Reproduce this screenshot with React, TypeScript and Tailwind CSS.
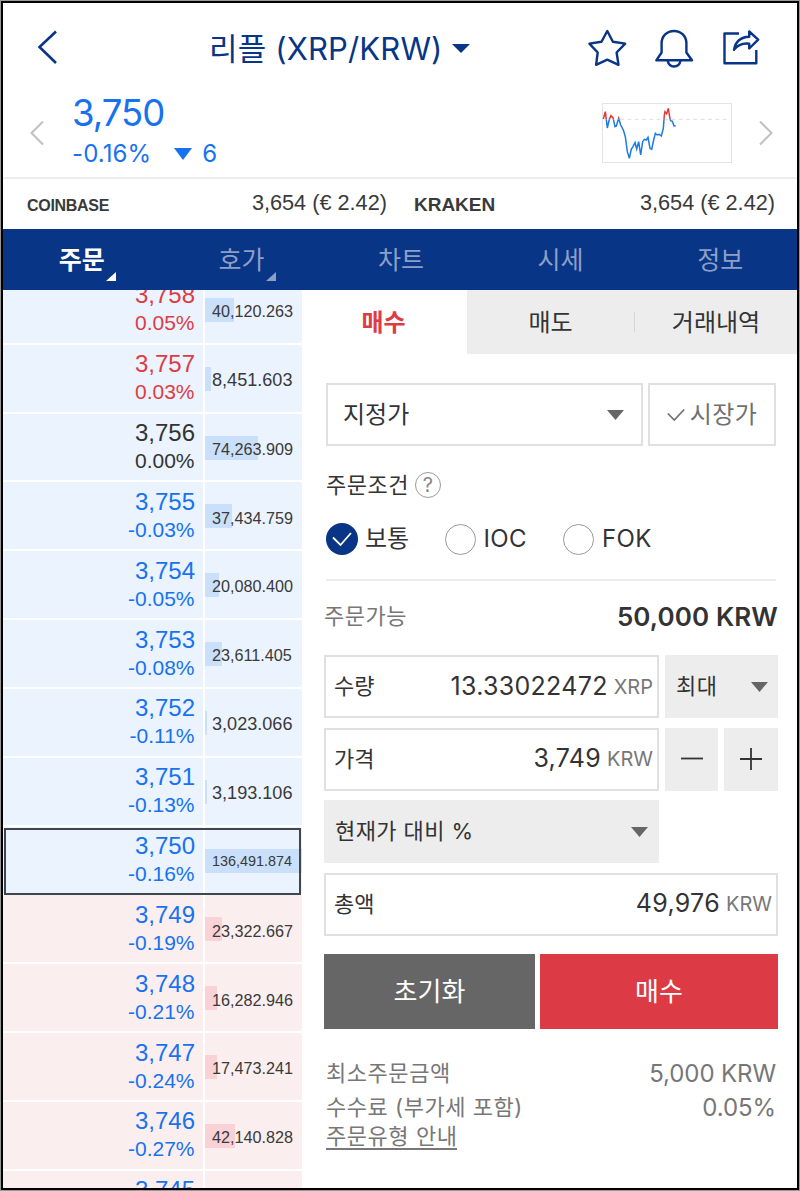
import React from "react";

const MAX_VOLUME = 136491.874;

const orders = [
  { price: "3,758", rate: "0.05%", volume: "40,120.263", color: "text-[#dd3c44]", side: "ask" },
  { price: "3,757", rate: "0.03%", volume: "8,451.603", color: "text-[#dd3c44]", side: "ask" },
  { price: "3,756", rate: "0.00%", volume: "74,263.909", color: "text-[#333333]", side: "ask" },
  { price: "3,755", rate: "-0.03%", volume: "37,434.759", color: "text-[#1772f0]", side: "ask" },
  { price: "3,754", rate: "-0.05%", volume: "20,080.400", color: "text-[#1772f0]", side: "ask" },
  { price: "3,753", rate: "-0.08%", volume: "23,611.405", color: "text-[#1772f0]", side: "ask" },
  { price: "3,752", rate: "-0.11%", volume: "3,023.066", color: "text-[#1772f0]", side: "ask" },
  { price: "3,751", rate: "-0.13%", volume: "3,193.106", color: "text-[#1772f0]", side: "ask" },
  { price: "3,750", rate: "-0.16%", volume: "136,491.874", color: "text-[#1772f0]", side: "ask" },
  { price: "3,749", rate: "-0.19%", volume: "23,322.667", color: "text-[#1772f0]", side: "bid" },
  { price: "3,748", rate: "-0.21%", volume: "16,282.946", color: "text-[#1772f0]", side: "bid" },
  { price: "3,747", rate: "-0.24%", volume: "17,473.241", color: "text-[#1772f0]", side: "bid" },
  { price: "3,746", rate: "-0.27%", volume: "42,140.828", color: "text-[#1772f0]", side: "bid" },
  { price: "3,745", rate: "", volume: "", color: "text-[#1772f0]", side: "bid" },
];

const CHART =
  "4,48 10,26 16,75 22,49 27,38 33,44 39,71 43,69 50,46 56,66 64,81 70,101 76,146 82,166 88,138 93,131 99,119 104,138 110,116 116,156 122,116 127,109 133,111 138,103 144,136 149,139 155,111 160,91 166,96 172,94 178,99 184,76 187,36 189,26 194,32 199,16 204,48 206,53 211,55 216,69 221,68";

const Caret = ({ className }: { className: string }) => (
  <svg viewBox="0 0 18 10" preserveAspectRatio="none" className={className}>
    <path d="M0 0H18L9 10Z" fill="currentColor" />
  </svg>
);

const Header = () => {
  return (
    <header className="h-[174px] shrink-0">
      <div className="flex h-[90px] items-center pl-[34px] pr-[37px] text-[#083585]">
        <svg width="22" height="36" viewBox="0 0 22 36" fill="none" stroke="currentColor" strokeWidth="2.6">
          <path d="M19 1.5L2.5 17L19 33" />
        </svg>
        <div className="ml-[150px] flex items-center">
          <h1 className="whitespace-nowrap pt-[2px] text-[31px] leading-[40px] tracking-[0.15px]">리플 (XRP/KRW)</h1>
          <Caret className="ml-[9px] h-[9px] w-[18px]" />
        </div>
        <div className="ml-auto flex gap-[26.5px]">
          <svg width="40" height="40" viewBox="0 0 40 40" fill="none" stroke="currentColor" strokeWidth="2.4" strokeLinejoin="round">
            <path d="M20.3 3L25.9 13.7L38.2 15.6L29.6 24.5L31.5 36.8L20.3 31.6L9.1 36.8L10.7 24.5L2.4 15.6L14.5 13.7Z" />
          </svg>
          <svg width="40" height="40" viewBox="0 0 40 40" fill="none" stroke="currentColor" strokeWidth="2.4" strokeLinejoin="round">
            <path d="M2.3 32.3L7.6 24.5V15.5C7.6 8 13 3 20 3S32.4 8 32.4 15.5V24.5L38 32.3Z" />
            <path d="M13.7 32.8C14.5 36.8 17 38.5 20 38.5S25.7 36.8 26.5 32.8" />
          </svg>
          <svg width="40" height="40" viewBox="0 0 40 40" fill="none" stroke="currentColor" strokeWidth="2.4" strokeLinejoin="round">
            <path d="M19 5.5H4.5V35.3H36.3V22" />
            <path d="M14 21.7C15.5 13.5 20.5 9 29.2 8.7V3.5L38.2 11.6L29.2 20.5V15.7C22.5 15 18 16.5 14 21.7Z" />
          </svg>
        </div>
      </div>
      <div className="flex h-[84px] pl-[27px] pr-[24px]">
        <svg className="mt-[27px]" width="14" height="26" viewBox="0 0 14 26" fill="none" stroke="#c0c0c0" strokeWidth="2">
          <path d="M13 1.5L1.5 13L13 24.5" />
        </svg>
        <div className="ml-[28px] text-[#1772f0]">
          <p className="text-[36.5px] leading-[40px] tracking-[-1px]">3,750</p>
          <p className="flex h-[40px] items-center pt-[1px] text-[24px] leading-[40px] tracking-[0.1px]">
            -0.16%
            <Caret className="ml-[23px] h-[12px] w-[18px]" />
            <span className="ml-[10px]">6</span>
          </p>
        </div>
        <svg className="ml-auto mt-[10px]" width="130" height="60" viewBox="0 0 390 180" fill="none">
          <defs>
            <clipPath id="up">
              <rect width="390" height="49" />
            </clipPath>
            <clipPath id="down">
              <rect y="49" width="390" height="131" />
            </clipPath>
          </defs>
          <rect x="1.5" y="1.5" width="387" height="177" stroke="#e4e4e4" strokeWidth="3" />
          <path d="M54 49H376" stroke="#dedede" strokeWidth="3" strokeDasharray="12 10" />
          <polyline points={CHART} stroke="#e03a35" strokeWidth="4.5" clipPath="url(#up)" />
          <polyline points={CHART} stroke="#1b7be0" strokeWidth="4.5" clipPath="url(#down)" />
        </svg>
        <svg className="ml-[27px] mt-[27px]" width="14" height="26" viewBox="0 0 14 26" fill="none" stroke="#c0c0c0" strokeWidth="2">
          <path d="M1 1.5L12.5 13L1 24.5" />
        </svg>
      </div>
    </header>
  );
};

const Exchanges = () => {
  return (
    <div className="flex h-[52px] shrink-0 items-center border-t-2 border-[#ededed] pl-[24px] pr-[22px] pb-px font-['Liberation_Sans',sans-serif] text-[#3a3a3a]">
      <span className="pt-[4px] text-[16px] font-bold tracking-[-0.3px]">COINBASE</span>
      <span className="ml-auto text-[21.7px]">3,654 (€ 2.42)</span>
      <span className="ml-[27px] w-[226px] pt-[3px] text-[19px] font-bold">KRAKEN</span>
      <span className="text-[21.7px]">3,654 (€ 2.42)</span>
    </div>
  );
};

const Nav = () => {
  return (
    <nav className="flex h-[61px] shrink-0 overflow-hidden bg-[#083585]">
      {["주문", "호가", "차트", "시세", "정보"].map((item, i) => (
        <div
          key={item}
          className={`relative flex w-[159.6px] shrink-0 items-center justify-center pr-[2px] pt-[2px] text-[25px] ${
            i === 0 ? "font-bold text-white" : "text-[#8d9fc8]"
          }`}
        >
          {item}
          {i < 2 && (
            <svg className="absolute bottom-[9px] left-[103px]" width="10" height="9" viewBox="0 0 10 9">
              <path d="M10 0V9H0Z" fill="currentColor" />
            </svg>
          )}
        </div>
      ))}
    </nav>
  );
};

const OrderBook = () => {
  return (
    <div className="w-[299px] shrink-0 overflow-hidden font-['Liberation_Sans',sans-serif]">
      <div className="-mt-[14.2px]">
        {orders.map((item) => {
          const bg = item.side === "ask" ? "bg-[#eaf3fe]" : "bg-[#fbeeef]";
          const bar = item.side === "ask" ? "bg-[#c9dffa]" : "bg-[#f8d2d6]";
          const size =
            item.volume.length > 10 ? "text-[14.4px]" : item.volume.length > 9 ? "text-[16.2px]" : "text-[18.1px]";
          const amount = Number(item.volume.replace(/,/g, ""));
          return (
            <div key={item.price} className="relative flex h-[68.85px] gap-[2px] pb-[2px]">
              <div className={`w-[200px] pr-[8px] pt-[5.5px] text-right ${bg} ${item.color}`}>
                <p className="text-[24px] leading-[28px]">{item.price}</p>
                <p className="pr-[0.5px] text-[21px] leading-[27.5px]">{item.rate}</p>
              </div>
              <div className={`relative flex w-[97px] items-center pl-[7px] pt-[4px] text-[#3a3a3a] ${bg} ${size}`}>
                <div
                  className={`absolute left-0 top-[22px] h-[24px] ${bar}`}
                  style={{ width: `${(amount / MAX_VOLUME) * 100}%` }}
                />
                <span className="relative">{item.volume}</span>
              </div>
              {item.price === "3,750" && (
                <div className="absolute left-px right-px top-px h-[67px] border-2 border-[#3f464d]" />
              )}
            </div>
          );
        })}
      </div>
    </div>
  );
};

const Field = ({ label, value, unit, className }: { label: string; value: string; unit: string; className: string }) => {
  return (
    <div className={`flex h-[63px] items-center border-2 border-[#e0e0e0] ${className}`}>
      <span className="pl-[8px] text-[22px]">{label}</span>
      <span className="ml-auto text-[25px] tracking-[0.3px]">{value}</span>
      <span className="pl-[6px] pr-[4px] text-[20px] text-[#777777]">{unit}</span>
    </div>
  );
};

const OrderForm = () => {
  return (
    <div className="flex-1 text-[#333333]">
      <div className="flex h-[63.5px] text-[24px]">
        <div className="flex w-[165px] items-center justify-center pr-[2px] pt-[2px] font-bold text-[#dd3c44]">매수</div>
        <div className="flex w-[167px] items-center justify-center bg-[#ededed] pt-[2px]">매도</div>
        <div className="relative flex flex-1 items-center justify-center bg-[#ededed] pr-[2px] pt-[2px]">
          <div className="absolute left-0 top-[22px] h-[20px] w-px bg-[#d6d6d6]" />
          거래내역
        </div>
      </div>

      <div className="px-[22px]">
        <div className="ml-[2px] mr-[2px] mt-[29.5px] flex h-[63px] gap-[5px]">
          <div className="flex w-[317px] items-center justify-between border-2 border-[#e0e0e0] pl-[15px] pr-[17px] text-[24px]">
            지정가
            <Caret className="h-[10px] w-[17px] text-[#666666]" />
          </div>
          <div className="flex w-[128px] items-center justify-center border-2 border-[#e0e0e0] text-[24px] text-[#707070]">
            <svg className="mr-[5px]" width="18" height="14" viewBox="0 0 18 14" fill="none" stroke="currentColor" strokeWidth="1.7">
              <path d="M0.8 5.5L7.3 12L17.2 1.5" />
            </svg>
            <span className="tracking-[0.4px]">시장가</span>
          </div>
        </div>

        <div className="ml-[2px] mt-[24px] flex h-[30px] items-center text-[22px]">
          <span className="tracking-[0.5px]">주문조건</span>
          <span className="ml-[6px] flex size-[26px] items-center justify-center rounded-full border-[1.5px] border-[#999999] text-[20px] text-[#888888]">
            ?
          </span>
        </div>

        <div className="ml-[2px] mt-[23px] flex h-[32px] items-center text-[24px]">
          <div className="flex w-[118.5px] items-center">
            <span className="flex size-[32px] items-center justify-center rounded-full bg-[#083585]">
              <svg width="20" height="16" viewBox="0 0 20 16" fill="none" stroke="white" strokeWidth="1.8">
                <path d="M1 6.5L8.5 14L19 2" />
              </svg>
            </span>
            <span className="ml-[7px]">보통</span>
          </div>
          <div className="flex w-[118.5px] items-center">
            <span className="size-[31px] rounded-full border-[1.5px] border-[#999999]" />
            <span className="ml-[8px] tracking-[0.3px]">IOC</span>
          </div>
          <div className="flex items-center">
            <span className="size-[31px] rounded-full border-[1.5px] border-[#999999]" />
            <span className="ml-[8px] tracking-[0.4px]">FOK</span>
          </div>
        </div>

        <div className="ml-[2px] mr-[2px] mt-[24px] h-[2px] bg-[#ebebeb]" />

        <div className="mt-[17px] flex h-[36px] items-center justify-between">
          <span className="text-[22px] tracking-[0.5px] text-[#777777]">주문가능</span>
          <span className="text-[26px] font-semibold tracking-[0.1px]">50,000 KRW</span>
        </div>

        <div className="mt-[21px] flex gap-[6px]">
          <Field label="수량" value="13.33022472" unit="XRP" className="w-[335px]" />
          <div className="flex h-[63px] w-[113px] items-center justify-between bg-[#ededed] pl-[11px] pr-[10px] text-[22px]">
            <span className="tracking-[0.5px]">최대</span>
            <Caret className="h-[10px] w-[17px] text-[#666666]" />
          </div>
        </div>

        <div className="mt-[9.5px] flex gap-[6px]">
          <Field label="가격" value="3,749" unit="KRW" className="w-[335px]" />
          <div className="flex h-[63px] w-[53px] items-center justify-center bg-[#ededed]">
            <svg width="24" height="24" viewBox="0 0 24 24" stroke="#333333" strokeWidth="1.8">
              <path d="M1 11.5H23" />
            </svg>
          </div>
          <div className="flex h-[63px] w-[54px] items-center justify-center bg-[#ededed]">
            <svg width="24" height="24" viewBox="0 0 24 24" stroke="#333333" strokeWidth="1.8">
              <path d="M1 12H23M12 1V23" />
            </svg>
          </div>
        </div>

        <div className="mt-[9.5px] flex h-[63px] w-[335px] items-center justify-between bg-[#ededed] pl-[11px] pr-[11px] text-[22px]">
          <span className="tracking-[0.4px]">현재가 대비 %</span>
          <Caret className="h-[10px] w-[17px] text-[#666666]" />
        </div>

        <Field label="총액" value="49,976" unit="KRW" className="mt-[9.5px] w-[454px]" />

        <div className="mt-[18.5px] flex h-[75px] gap-[5px] text-[26px] text-white">
          <div className="flex w-[211px] items-center justify-center bg-[#666666]">초기화</div>
          <div className="flex w-[238px] items-center justify-center bg-[#dc3a45]">매수</div>
        </div>

        <div className="ml-[2px] mr-[2px] mt-[28px] text-[22px] leading-[33.5px] tracking-[0.55px] text-[#777777]">
          <div className="flex justify-between">
            <span>최소주문금액</span>
            <span className="text-[24px] tracking-[-0.1px]">5,000 KRW</span>
          </div>
          <div className="flex justify-between">
            <span>수수료 (부가세 포함)</span>
            <span className="text-[24px] tracking-[-0.1px]">0.05%</span>
          </div>
          <div className="-mt-[3px] flex">
            <span className="h-[29px] border-b-2 border-[#777777] leading-[31px]">주문유형 안내</span>
          </div>
        </div>
      </div>
    </div>
  );
};

const App = () => {
  return (
    <div className="h-[1191px] w-[800px] overflow-hidden bg-[#9a9a9a] p-px font-['Inter','Noto_Sans_CJK_KR',sans-serif]">
      <div className="flex h-full w-full flex-col overflow-hidden border-2 border-black bg-white">
        <Header />
        <Exchanges />
        <Nav />
        <main className="flex min-h-0 flex-1 overflow-hidden">
          <OrderBook />
          <OrderForm />
        </main>
      </div>
    </div>
  );
};

export default App;
